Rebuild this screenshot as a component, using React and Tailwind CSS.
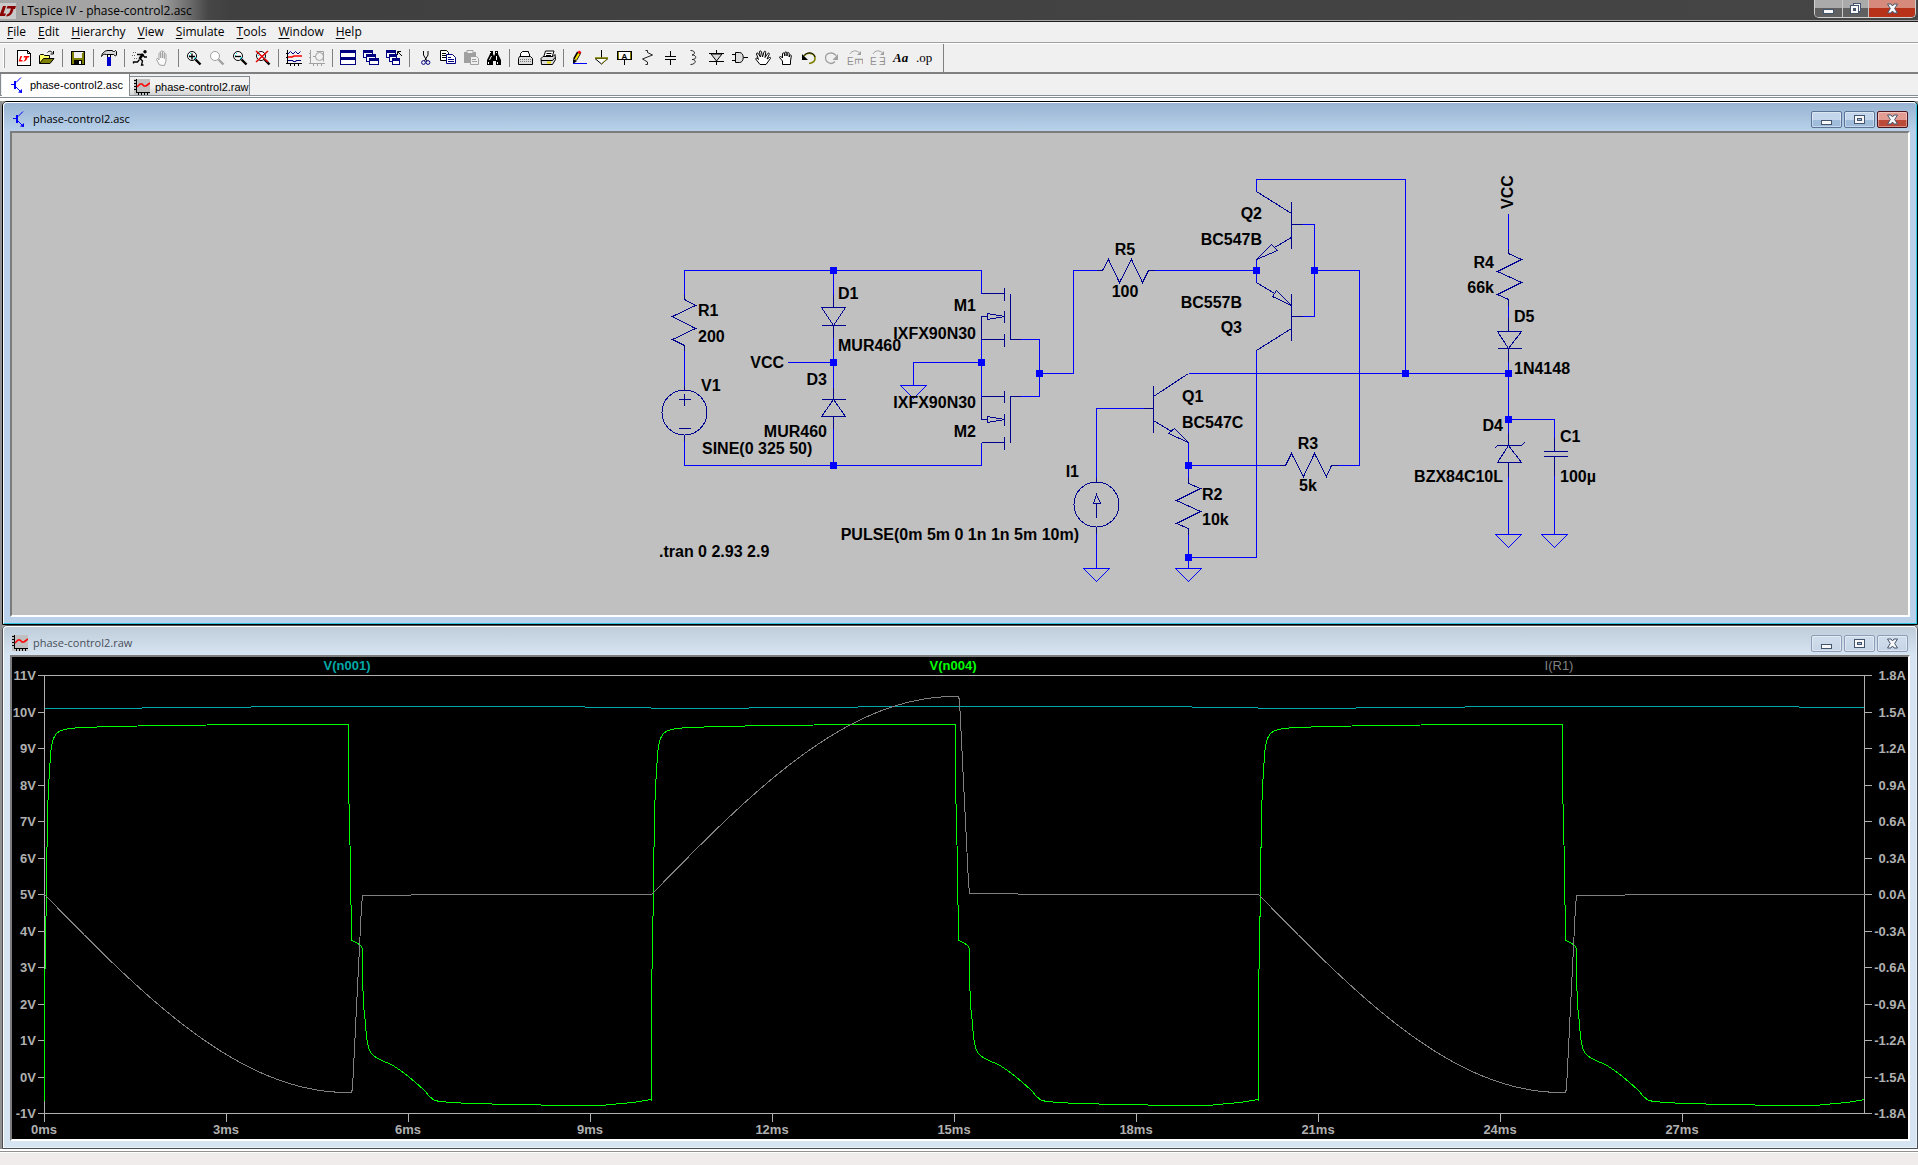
import React from "react";

const UI = "font-['Open_Sans','Noto_Sans',sans-serif]";

/* ---------- small 16x16 toolbar icons ---------- */

function Icon({ children }) {
  return (
    <svg width="16" height="16" viewBox="0 0 16 16" fill="none" stroke="#000" strokeWidth="1" className="block shrink-0">
      {children}
    </svg>
  );
}

function Lens({ color = "#000", tint = "#00e5ff" }) {
  return (
    <>
      <circle cx="6" cy="6" r="4.5" stroke={color} fill="#fff" />
      {tint && <path d="M3 5.5h1M4 3.5h1M8 8.5h1M9 7.5h1" stroke={tint} />}
      <path d="M9.5 9.5L14.5 14.5" stroke={color} strokeWidth="2.4" />
    </>
  );
}

function WindowBox({ x, y, w, h }) {
  return (
    <g shapeRendering="crispEdges">
      <rect x={x + 0.5} y={y + 0.5} width={w - 1} height={h - 1} fill="#fff" stroke="#000080" />
      <rect x={x} y={y} width={w} height="3" fill="#000080" stroke="none" />
    </g>
  );
}

function TransistorIcon() {
  return (
    <svg width="14" height="16" viewBox="0 0 14 16" fill="none" stroke="#0000ff" className="block shrink-0">
      <path d="M1 7.500h3M5 4v8" strokeWidth="1" shapeRendering="crispEdges" />
      <rect x="4" y="4" width="2" height="8" fill="#0000ff" stroke="none" />
      <path d="M6 5.500L11 .500M6 10L10.500 14.500" />
      <path d="M12 16V12L8 15.500z" fill="#0000ff" stroke="none" />
    </svg>
  );
}

function GraphIcon() {
  return (
    <svg width="16" height="16" viewBox="0 0 16 16" fill="none" className="block shrink-0">
      <rect width="16" height="16" fill="#c0c0c0" />
      <path d="M2.5 0v14M0 1.5h2M0 4.5h2M0 7.5h2M0 10.5h2M2 13.5h14M4.5 14v2M7.5 14v2M10.5 14v2M13.5 14v2" stroke="#000" shapeRendering="crispEdges" />
      <path d="M3 8L6 5h2l2 2h2l4-3" stroke="#ff0000" strokeWidth="1.6" />
    </svg>
  );
}

function LogoIcon() {
  return (
    <svg width="16" height="16" viewBox="0 0 16 16" className="block shrink-0">
      <rect width="16" height="16" fill="#c9c9c9" />
      <path d="M3 3h3L3.500 10.500H6L5 13H0V11ZM7.500 3H16l-1 3h-1.500C12.500 10 11.500 13 6 13.500l1-2C9 11 10 9 11 5.500H6.500Z" fill="#8b0000" />
    </svg>
  );
}

const tools = [
  ["New Schematic", <Icon><path d="M1.500.500h10l3 3v12h-13z" fill="#fff" shapeRendering="crispEdges" /><path d="M11.500.500v3h3" /><path d="M4.500 6h1.700L4.500 10h2v1.500H2.500ZM8 6h5.500l-.7 1.500h-1.300C11 10 9.500 11.500 7 11.500c1.500-1 2-2 2.500-4H7.500Z" fill="#f00" stroke="none" /></Icon>],
  ["Open", <Icon><path d="M.500 13.500v-8l1-1h3l1 1h5v3" fill="#ffff66" /><path d="M.500 13.500l4-5h10.500l-4 5z" fill="#808000" /><path d="M8.500 2.500c1.500-2 4-1.500 5 .500M14.500 1v3h-3" /></Icon>],
  null,
  ["Save", <Icon><g shapeRendering="crispEdges"><rect x="1.500" y="1.500" width="13" height="13" fill="#808000" /><rect x="4" y="2" width="8" height="6" fill="#efefef" stroke="none" /><rect x="4" y="10" width="8" height="5" fill="#000" stroke="none" /><rect x="9" y="11" width="2" height="3" fill="#fff" stroke="none" /><path d="M12.500 2v1" stroke="#fff" /></g></Icon>],
  null,
  ["Control Panel", <Icon><path d="M.500 6.500C1 3 4 .500 7 .500h4l1.500 1h1l1-1 1 1v3.500l-1 1-2-1.500H5.500C3 3.500 1.500 5 .500 6.500z" fill="#d8d8d8" /><path d="M6.500 4.500v3M9.500 4.500v3" /><rect x="6" y="7" width="4" height="9" fill="#0000cc" stroke="none" /></Icon>],
  null,
  ["Run", <Icon><circle cx="13" cy="1.800" r="1.700" fill="#000" stroke="none" /><path d="M11 4L7.500 9" strokeWidth="2.600" /><path d="M5 4.500h5.500l2 2.500h2.500M8 8.500l2.500 2.500-1 4h2M7.500 9.500L5.500 12H1.500v1.500" strokeWidth="1.300" /><path d="M1 2.500h3M0 5.500h3M2 8.500h3" stroke="#666" strokeDasharray="1 1" /></Icon>],
  ["Halt", <Icon><path d="M4.500 15L1.500 9.500c0-1.500 1.500-1.500 2.500.500V3.500c0-1 1.700-1 1.700 0V8V1.800c0-1.200 1.800-1.200 1.800 0V8V2.300c0-1.200 1.800-1.200 1.800 0V8.500V4.500c0-1.200 1.700-1.200 1.700 0V11l-1.500 4.500z" stroke="#a0a0a0" fill="#fafafa" /></Icon>],
  null,
  ["Zoom In", <Icon><Lens /><path d="M3 6.500h6M6 3.500v6" strokeWidth="1.400" stroke="#000" /></Icon>],
  ["Pan", <Icon><Lens color="#a0a0a0" tint="" /></Icon>],
  ["Zoom Out", <Icon><Lens /><path d="M3 6.500h6" strokeWidth="1.400" /></Icon>],
  ["Zoom Full Extents", <Icon><Lens /><path d="M1 1L13 12M13 1L1 12" stroke="#e00000" strokeWidth="1.600" /></Icon>],
  null,
  ["Autorange", <Icon><path d="M1.500 0v14M0 13.500h16M4.500 13v3M8.500 13v3M12.500 13v3M0 3.500h2M0 7.500h2" shapeRendering="crispEdges" stroke="#000" /><path d="M2 4L4.500 1.500 7 4 9.500 1.500 12 4 14.500 1.500" stroke="#000080" /><path d="M2 7h4l2-1h8" stroke="#f00" strokeWidth="1.600" /><path d="M2 10.500h5v1h3v-1h5" stroke="#000080" /></Icon>],
  ["Pick Visible Traces", <Icon><g stroke="#a0a0a0"><path d="M1.500 0v14M0 13.500h16M4.500 13v3M8.500 13v3M12.500 13v3M0 3.500h2M0 7.500h2M4 6.500h3" shapeRendering="crispEdges" /><circle cx="10.500" cy="6.500" r="4" /><path d="M7.500 1.500h7M14.500 1.500v10" /></g></Icon>],
  null,
  ["Tile Windows", <Icon><WindowBox x={0} y={0} w={16} h={8} /><WindowBox x={0} y={7} w={16} h={8} /></Icon>],
  ["Cascade Windows", <Icon><WindowBox x={0} y={0} w={10} h={8} /><WindowBox x={3} y={4} w={10} h={8} /><WindowBox x={6} y={8} w={10} h={7} /></Icon>],
  ["Close Windows", <Icon><WindowBox x={0} y={0} w={10} h={8} /><WindowBox x={3} y={4} w={8} h={8} /><WindowBox x={6} y={8} w={8} h={7} /><path d="M11.500 5V1.500H15M12 2l4 4" /></Icon>],
  null,
  ["Cut", <Icon><path d="M6.500 1v4L10 11M11 1v4L7.500 11" stroke="#000" /><circle cx="6.500" cy="12.500" r="1.900" stroke="#000080" /><circle cx="11" cy="12.500" r="1.900" stroke="#000080" /></Icon>],
  ["Copy", <Icon><path d="M.500.500h6l2 2v8h-8z" fill="#fff" /><path d="M2 3.500h4M2 5.500h4M2 7.500h4" /><path d="M6.500 4.500h6l3 3v6h-9z" fill="#fff" stroke="#000080" /><path d="M8 7.500h3M8 9.500h6M8 11.500h6" stroke="#000080" /></Icon>],
  ["Paste", <Icon><path d="M1 2h12v11H1z" fill="#a0a0a0" stroke="none" /><path d="M4 .500h6v3H4z" stroke="#a0a0a0" fill="#efefef" /><path d="M7.500 6.500h6l2 2v6h-8z" fill="#efefef" stroke="#a0a0a0" /><path d="M9 9.500h4M9 11.500h5" stroke="#a0a0a0" /></Icon>],
  ["Find", <Icon><path d="M4 1h3v3l1 2 1-2V1h3v3l3 6v5H10v-4H7v4H1v-5l3-6z" fill="#000" stroke="none" /><path d="M4.500 2v1M10.500 2v1M5.500 6L3.500 10M10.500 6v4M2.500 12v2M11.500 12v2" stroke="#fff" /></Icon>],
  null,
  ["Print Setup", <Icon><path d="M3.500 7V3.500l2-2h6v1.500l1 1V7" fill="#fff" /><path d="M2.500 6.500h11l2 2v6h-14v-6z" fill="#ddd" /><path d="M3 9.500h11M3 11.500h11" stroke="#777" strokeDasharray="1 1" /></Icon>],
  ["Print", <Icon><path d="M3.500 7.500l2-6.500h8.500l-2 6.500z" fill="#fff" /><path d="M6.500 3.500h5M6 5.500h5" /><path d="M1 8.500l2-2h10l2-2 .500 5-3 5H1.500z" fill="#ddd" /><path d="M1 10.500h11.500l2.500-3" /><path d="M7 12.500h4" stroke="#e8d800" strokeWidth="2" /></Icon>],
  null,
  ["Draw Wire", <Icon><path d="M4 9.500L8 2.500" stroke="#000" strokeWidth="4.500" /><path d="M4.500 9.500L8 3.500" stroke="#ffe600" strokeWidth="2" /><path d="M6.500 2.500L8 .500l2.500 1.500L9 4z" fill="#f00" stroke="none" /><path d="M2 9v5l4-3z" fill="#000" stroke="none" /><path d="M2 13.500h14" stroke="#0000ff" /></Icon>],
  ["Place Ground", <Icon><path d="M7.500 0v8" /><path d="M1 8.500h13L7.500 14z" fill="#fff" /><path d="M1 8h13" stroke="#808000" strokeWidth="1.600" /><path d="M7.500 14l6-5.500" stroke="#808000" /></Icon>],
  ["Label Net", <Icon><rect x=".500" y="1.500" width="14" height="8" fill="#fff" /><path d="M1.500 2v7M13.500 2v7" stroke="#808000" /><text x="7.500" y="8.500" textAnchor="middle" stroke="none" fill="#000" className="font-['Liberation_Sans',sans-serif] text-[8px] font-bold">A</text><path d="M7.500 10v5" /></Icon>],
  ["Resistor", <Icon><path d="M5.500.500h2v2l5 2.500-10 4 5 3v2.500h-2" stroke="#222" /></Icon>],
  ["Capacitor", <Icon><path d="M7.500 1v5M7.500 10v5M2 9.500h11M2 6.500h11" shapeRendering="crispEdges" /></Icon>],
  ["Inductor", <Icon><path d="M4.500.500c5 0 5 4 1.500 4.500 5 0 5 4.500 0 4.500 5 0 4 5-1.500 5" stroke="#222" /></Icon>],
  ["Diode", <Icon><path d="M7.500 0v4M7.500 11v4M0 3.500h15M0 11.500h15" shapeRendering="crispEdges" /><path d="M2 4h11L7.500 11z" fill="#d8d8d8" /></Icon>],
  ["Component", <Icon><path d="M3.500 2.500h4c5 0 5 10 0 10h-4z" fill="#ddd" /><path d="M0 4.500h3M0 10.500h3M11.500 7.500h4.500" /></Icon>],
  ["Move", <Icon><path d="M5 14.500L.700 9c0-1.500 1.800-1 2.800.500L1.500 4c0-1.500 1.500-1.500 2 0L5.500 7 4.500 2c0-1.500 1.500-1.500 2 0L7.500 7 9 2c.500-1.300 2-1 1.700.500L10 7.500l2.700-4c1-1 2-.300 1.500 1L12 9l2.500-1.500c1.500-.500 1.500 1 .500 1.500L11 14.500z" fill="#fff" /></Icon>],
  ["Drag", <Icon><path d="M4.500 14.500V11L1.500 7.500c0-1.500 2-1 3 .500V4c0-1.500 2-1.500 2.300 0V6 3c0-1.500 2-1.500 2.200 0v3-2.500c.300-1.300 2-1.300 2.200 0V7l.300-1.500c.800-1 2-.500 1.800.500L12.500 11v3.500z" fill="#fff" /></Icon>],
  ["Undo", <Icon><path d="M3 6c3-4 10-3.500 11 1.500.500 4-2.500 5.500-6 6" stroke="#808000" strokeWidth="1.600" /><path d="M3 5.500c3-4 10-3.500 11 1.500" stroke="#000" /><path d="M1 4v6H7z" fill="#000" stroke="none" /></Icon>],
  ["Redo", <Icon><path d="M12 5.500C9 1.500 2 2.500 1.500 7.500c0 4 2.500 5.500 5.500 6 2 0 3-1 4-2" stroke="#a0a0a0" strokeWidth="1.300" /><path d="M14 4v6H8.500z" fill="#a0a0a0" stroke="none" /></Icon>],
  ["Rotate", <Icon><path d="M3 4C5 0 10 0 12.500 3" stroke="#a0a0a0" /><path d="M14 1v4H10z" fill="#a0a0a0" stroke="none" /><text x="0" y="15" stroke="none" fill="#909090" className="font-['Liberation_Sans',sans-serif] text-[10px]">E</text><text x="8" y="-8" transform="rotate(90)" stroke="none" fill="#909090" className="font-['Liberation_Sans',sans-serif] text-[10px]">E</text></Icon>],
  ["Mirror", <Icon><path d="M3 4C5 0 10 0 12.500 3" stroke="#a0a0a0" /><path d="M14 1v4H10z" fill="#a0a0a0" stroke="none" /><text x="0" y="15" stroke="none" fill="#909090" className="font-['Liberation_Sans',sans-serif] text-[10px]">E</text><text x="9" y="15" stroke="none" fill="#909090" className="font-['Liberation_Sans','DejaVu_Sans',sans-serif] text-[10px]">Ǝ</text></Icon>],
  ["Text", <span className="font-['Liberation_Serif',serif] text-[13px] leading-4 font-bold italic">Aa</span>],
  ["SPICE Directive", <span className="font-['Liberation_Serif',serif] text-[13px] leading-4">.op</span>],
];

/* ---------- window chrome ---------- */

function Glyph({ kind, small }) {
  return (
    <svg width="13" height="13" viewBox="0 0 13 13" className="block" shapeRendering={kind === "close" ? "auto" : "crispEdges"}>
      {kind === "min" && <rect x="1.500" y="7.500" width="10" height="4" fill="#f8f8f8" stroke="#44546c" />}
      {kind === "max" && !small && (
        <>
          <path d="M4.500 1.500h7v8h-7z" fill="#f8f8f8" stroke="#44546c" />
          <path d="M1.500 3.500h8v8h-8z" fill="#f8f8f8" stroke="#44546c" />
          <path d="M4.500 6.500h2v2h-2z" fill="#555" stroke="#44546c" />
        </>
      )}
      {kind === "max" && small && (
        <>
          <path d="M1.500 2.500h10v8h-10z" fill="#f8f8f8" stroke="#44546c" />
          <path d="M4.500 5.500h4v2h-4z" fill="#9fb6d4" stroke="#44546c" />
        </>
      )}
      {kind === "close" && (
        <path d="M1.500 2h3.500l1.500 2 1.500-2h3.500L8.700 6.500 11.500 11H8L6.500 9 5 11H1.500l2.800-4.500z" fill="#f8f8f8" stroke="#44546c" />
      )}
    </svg>
  );
}

function ChildButton({ kind, active }) {
  let tone = "border-[#8d9db8] bg-linear-to-b from-[#d0ddeb] to-[#c6d5e6]";
  if (active) tone = "border-[#5b7396] bg-linear-to-b from-[#c3d6eb] from-50% to-[#a0bcdb] to-50%";
  if (active && kind === "close") tone = "border-[#4a1420] bg-linear-to-b from-[#e39c92] from-50% to-[#bb4a38] to-50%";
  return (
    <button type="button" aria-label={kind} className={`flex h-[17px] w-[31px] items-center justify-center border rounded-[2px] shadow-[inset_0_0_0_1px_rgba(255,255,255,.4)] ${tone}`}>
      <Glyph kind={kind} small />
    </button>
  );
}

function ChildWindow({ title, icon, active, children }) {
  return (
    <section className={`flex min-h-0 flex-1 flex-col rounded-t-[5px] border ${active ? "border-black" : "border-[#4b4f55]"}`}>
      <div
        className={`flex min-h-0 flex-1 flex-col rounded-t-[4px] border border-t-white border-l-white ${
          active ? "border-r-[#2fc3e0] border-b-[#2fc3e0] bg-[#b9d1ea]" : "border-r-[#e8f0f8] border-b-[#e8f0f8] bg-[#d7e4f2]"
        }`}
      >
        <header
          className={`flex h-7 shrink-0 items-center rounded-t-[4px] pt-1 pl-2 pr-2 bg-linear-to-b ${
            active ? "from-[#98b4d2] to-[#b9d1ea]" : "from-[#bfcddb] to-[#d7e4f2]"
          }`}
        >
          <div className="flex w-[21px] items-center">{icon}</div>
          <h2 className={`${UI} text-[11px] leading-4 ${active ? "text-black" : "text-[#4a4f58]"}`}>{title}</h2>
          <div className="ml-auto flex gap-[2px]">
            <ChildButton kind="min" active={active} />
            <ChildButton kind="max" active={active} />
            <ChildButton kind="close" active={active} />
          </div>
        </header>
        <div className="flex min-h-0 flex-1 px-[6px] pb-[6px]">
          <div className="min-h-0 min-w-0 flex-1 border-2 border-t-[#7c7c7c] border-l-[#7c7c7c] border-r-white border-b-white">{children}</div>
        </div>
      </div>
    </section>
  );
}

/* ---------- schematic ---------- */

const wires = [
  "M684 299V270H981V293", "M684 345V390", "M684 435V465H981V442",
  "M833 270V295M833 337V387M833 428V465M787 362H833",
  "M981 339V396M981 362H913V385M1020 339H1039V396H1020",
  "M1039 373H1073V270H1098M1152 270H1256",
  "M1256 191V179H1405V373M1256 259V282M1302 224H1314V316H1302M1314 270H1359V465H1337",
  "M1256 350V557H1188M1188 373H1508M1143 408H1096V478M1096 532V568",
  "M1188 442V483M1188 465H1279M1188 534V568",
  "M1508 213V253M1508 304V317M1508 361V432M1508 419H1554V437M1508 476V534M1554 475V534",
];

const parts = [
  "M684 294V299L695 305L672 316L695 328L672 339L684 345V350",
  "M684 385V390M684 435V440M678 399H690M684 393V405M678 428H690",
  "M833 294V307M821 307H845L833 325ZM821 325H845M833 325V337",
  "M833 387V399M821 399H845M833 399L845 416H821ZM833 416V428",
  "M981 293H1004M1004 287V300M1004 310V322M1004 333V346M981 339H1004M981 339V316H987M987 313V319L1004 316ZM1010 293V339H1020",
  "M981 396H1004M1004 390V402M1004 413V425M1004 436V449M981 396V419H987M987 416V422L1004 419ZM981 442H1004M1010 442V396H1020",
  "M1096 270H1102L1108 259L1119 282L1131 259L1142 282L1148 270H1154",
  "M1256 191L1291 213M1291 201V248M1291 224H1302M1291 237L1274 247M1256 259L1271 244L1277 250Z",
  "M1256 282L1274 293M1291 305L1276 290L1272 296ZM1291 293V340M1291 316H1302M1291 328L1256 350",
  "M1188 373L1153 396M1153 385V432M1143 408H1153M1153 420L1171 431M1188 442L1174 428L1168 433Z",
  "M1188 477V483L1200 488L1176 500L1200 511L1176 523L1188 528V534",
  "M1279 465H1285L1291 453L1303 476L1314 453L1326 476L1331 465H1337",
  "M1096 477V482M1096 527V533M1096 517V503M1096 494L1093 503H1100Z",
  "M1508 248V253L1521 259L1497 271L1521 282L1497 294L1508 299V305",
  "M1508 317V331M1497 331H1521L1508 348ZM1497 348H1521M1508 348V361",
  "M1508 432V445M1494 448L1497 445H1521L1524 442M1508 445L1521 462H1497ZM1508 462V476",
  "M1554 437V451M1543 451H1567M1543 456H1567M1554 456V475",
];

const grounds = [[913, 385], [1096, 568], [1188, 568], [1508, 534], [1554, 534]];
const nodes = [[833, 270], [833, 362], [833, 465], [981, 362], [1039, 373], [1256, 270], [1314, 270], [1405, 373], [1188, 465], [1188, 557], [1508, 373], [1508, 419]];

const labels = [
  [698, 316, "start", "R1"], [698, 342, "start", "200"], [701, 391, "start", "V1"],
  [784, 368, "end", "VCC"], [838, 299, "start", "D1"], [838, 351, "start", "MUR460"],
  [827, 385, "end", "D3"], [827, 437, "end", "MUR460"], [702, 454, "start", "SINE(0 325 50)"],
  [976, 311, "end", "M1"], [976, 339, "end", "IXFX90N30"], [976, 408, "end", "IXFX90N30"], [976, 437, "end", "M2"],
  [1079, 540, "end", "PULSE(0m 5m 0 1n 1n 5m 10m)"], [659, 557, "start", ".tran 0 2.93 2.9"],
  [1125, 255, "middle", "R5"], [1125, 297, "middle", "100"],
  [1262, 219, "end", "Q2"], [1262, 245, "end", "BC547B"], [1242, 308, "end", "BC557B"], [1242, 333, "end", "Q3"],
  [1182, 402, "start", "Q1"], [1182, 428, "start", "BC547C"],
  [1308, 449, "middle", "R3"], [1308, 491, "middle", "5k"],
  [1079, 477, "end", "I1"], [1202, 500, "start", "R2"], [1202, 525, "start", "10k"],
  [1494, 268, "end", "R4"], [1494, 293, "end", "66k"],
  [1514, 322, "start", "D5"], [1514, 374, "start", "1N4148"],
  [1503, 431, "end", "D4"], [1503, 482, "end", "BZX84C10L"],
  [1560, 442, "start", "C1"], [1560, 482, "start", "100µ"],
];

function Schematic() {
  return (
    <svg viewBox="12 133 1896 482" preserveAspectRatio="xMidYMid meet" className="block h-full w-full bg-[#c0c0c0] font-['Liberation_Sans',sans-serif] text-[16px] font-bold">
      <g transform="translate(.5 .5)" fill="none" shapeRendering="crispEdges">
        <path d={wires.join("")} stroke="#0000ff" />
        <path d={parts.join("")} stroke="#000090" />
        <circle cx="684" cy="412" r="22.500" stroke="#000090" />
        <circle cx="1096" cy="504" r="22.500" stroke="#000090" />
        {grounds.map(([x, y]) => (
          <path key={`${x}-${y}`} d={`M${x - 13} ${y}H${x + 13}L${x} ${y + 13}Z`} stroke="#0000ff" />
        ))}
      </g>
      {nodes.map(([x, y]) => (
        <rect key={`${x}-${y}`} x={x - 3} y={y - 3} width="7" height="7" fill="#0000ff" />
      ))}
      {labels.map(([x, y, anchor, t]) => (
        <text key={`${x}-${y}`} x={x} y={y} textAnchor={anchor} fill="#000">{t}</text>
      ))}
      <text transform="translate(1513 209) rotate(-90)" fill="#000">VCC</text>
    </svg>
  );
}

/* ---------- waveform plot ---------- */

const PERIOD = 607;
const gate = [
  [44, 1100], [44, 988], [45, 951], [46, 883], [47, 812], [48, 788], [49, 770], [50, 755], [51, 745], [53, 738], [56, 733], [60, 730], [69, 728],
  [81, 727], [112, 726], [163, 725], [250, 724], [348, 724], [348, 790], [349, 816], [350, 873], [351, 935], [351, 940], [356, 942], [360, 945],
  [362, 948], [362, 975], [363, 1005], [365, 1023], [366, 1037], [368, 1047], [370, 1052], [374, 1056], [381, 1060], [391, 1064], [400, 1070],
  [408, 1076], [415, 1082], [424, 1090], [429, 1096], [434, 1100], [440, 1101], [450, 1102], [471, 1103], [511, 1104], [569, 1105], [600, 1105],
  [612, 1104], [620, 1103], [633, 1102], [651, 1099],
];
/* quarter sine while the switch conducts, then a fast drop to zero */
const conduction = Array.from({ length: 78 }, (_, i) => [44 + i * 4, 198 * Math.sin((Math.PI * i * 4) / PERIOD)]).filter(([x]) => x < 351);
const current = [...conduction, [351, 198], [352, 194], [361, 12], [362, 1], [410, 1], [411, 0], [651, 0]];

const pts = (list) => list.map((p) => p.join(",")).join(" ");
const greenTrace = [0, 1, 2].flatMap((k) => gate.map(([x, y]) => [Math.min(x + k * PERIOD, 1864), y]));
const grayTrace = [0, 1, 2].flatMap((k) => current.map(([x, d]) => [Math.min(x + k * PERIOD, 1864), 894 + (k === 1 ? -d : d)]));
const cyanTrace = [0, 1, 2].flatMap((k) =>
  [[44, 708], [141, 708], [142, 707], [250, 707], [251, 706], [584, 706], [585, 707], [650, 707]].map(([x, y]) => [Math.min(x + k * PERIOD, 1864), y])
);

const volts = ["11V", "10V", "9V", "8V", "7V", "6V", "5V", "4V", "3V", "2V", "1V", "0V", "-1V"];
const amps = ["1.8A", "1.5A", "1.2A", "0.9A", "0.6A", "0.3A", "0.0A", "-0.3A", "-0.6A", "-0.9A", "-1.2A", "-1.5A", "-1.8A"];
const times = ["0ms", "3ms", "6ms", "9ms", "12ms", "15ms", "18ms", "21ms", "24ms", "27ms"];
const rowY = (i) => 675 + Math.round(i * 36.5);

function Plot() {
  return (
    <svg viewBox="12 657 1896 482" preserveAspectRatio="xMidYMid meet" className="block h-full w-full bg-black font-['Liberation_Sans',sans-serif] text-[13px] font-bold">
      <g transform="translate(.5 .5)" fill="none" shapeRendering="crispEdges">
        <polyline points={pts(cyanTrace)} stroke="#00a8a8" />
        <rect x="44" y="675" width="1820" height="438" stroke="#b0b0b0" />
        {volts.map((v, i) => (
          <path key={v} d={`M37 ${rowY(i)}H44M1864 ${rowY(i)}H1871`} stroke="#b0b0b0" />
        ))}
        {times.map((t, i) => (
          <path key={t} d={`M${44 + i * 182} 1113V1121`} stroke="#b0b0b0" />
        ))}
        <polyline points={pts(greenTrace)} stroke="#00ff00" />
        <polyline points={pts(grayTrace)} stroke="#808080" />
      </g>
      <g fill="#b0b0b0">
        {volts.map((v, i) => (
          <text key={v} x="36" y={rowY(i) + 5} textAnchor="end">{v}</text>
        ))}
        {amps.map((a, i) => (
          <text key={a} x="1906" y={rowY(i) + 5} textAnchor="end">{a}</text>
        ))}
        {times.map((t, i) => (
          <text key={t} x={44 + i * 182} y="1134" textAnchor="middle">{t}</text>
        ))}
      </g>
      <text x="347" y="670" textAnchor="middle" fill="#00a8a8">V(n001)</text>
      <text x="953" y="670" textAnchor="middle" fill="#00ff00">V(n004)</text>
      <text x="1559" y="670" textAnchor="middle" fill="#808080" className="font-normal">I(R1)</text>
    </svg>
  );
}

/* ---------- application ---------- */

const menus = ["File", "Edit", "Hierarchy", "View", "Simulate", "Tools", "Window", "Help"];

export default function App() {
  return (
    <div className={`flex h-screen min-h-[600px] flex-col overflow-hidden bg-[#f0f0f0] text-black ${UI}`}>
      <header className="flex h-[22px] shrink-0 items-start border-b border-[#1c1c1c] bg-linear-to-r from-[#8a8a8a] via-[#404040] via-12% to-[#454545] shadow-[inset_0_-1px_0_#a8a8a8]">
        <div className="flex h-5 items-center gap-[5px] bg-linear-to-r from-[#a4a4a4] from-75% to-transparent pt-0.5 pr-4">
          <LogoIcon />
          <h1 className="text-[12px] leading-4">LTspice IV - phase-control2.asc</h1>
        </div>
        <div className="ml-auto mr-[2px] flex h-[18px] overflow-hidden rounded-b-[5px] border border-t-0 border-[#d0d0d0]">
          <button type="button" aria-label="Minimize" className="flex w-7 items-center justify-center border-r border-[#c8c8c8] bg-linear-to-b from-[#aaaaaa] from-50% to-[#606060] to-50%"><Glyph kind="min" /></button>
          <button type="button" aria-label="Restore" className="flex w-[26px] items-center justify-center border-r border-[#c8c8c8] bg-linear-to-b from-[#aaaaaa] from-50% to-[#606060] to-50%"><Glyph kind="max" /></button>
          <button type="button" aria-label="Close" className="flex w-[46px] items-center justify-center bg-linear-to-b from-[#d58a7c] from-50% to-[#b8321a] to-50%"><Glyph kind="close" /></button>
        </div>
      </header>

      <nav className="flex h-[21px] shrink-0 items-center border-b border-[#a0a0a0] pl-px">
        {menus.map((m) => (
          <button key={m} type="button" className="px-[6px] text-[12px] leading-5">
            <span className="underline underline-offset-2">{m[0]}</span>
            {m.slice(1)}
          </button>
        ))}
      </nav>

      <div role="toolbar" aria-label="Main" className="flex h-[31px] shrink-0 items-stretch border-t border-b-2 border-t-white border-b-[#808080]">
        <div className="mx-[3px] my-1 w-0.5 border-r border-[#a0a0a0] bg-white" />
        <div className="ml-2 flex items-center border-r border-[#808080] pr-1">
          {tools.map((t, i) =>
            t ? (
              <button key={i} type="button" aria-label={t[0]} title={t[0]} className="flex h-[22px] w-[23px] items-center">
                {t[1]}
              </button>
            ) : (
              <div key={i} className="h-[18px] w-2 border-l border-[#808080]" />
            )
          )}
        </div>
      </div>

      <div role="tablist" className="flex h-[22px] shrink-0 items-end border-b border-l border-[#868a91] bg-[#f0f0f0] pl-px">
        <button role="tab" type="button" aria-selected="true" className="-mb-px flex h-[22px] w-32 items-center gap-[6px] border-r border-[#868a91] bg-white pl-2 font-['Liberation_Sans',sans-serif] text-[11px] whitespace-nowrap">
          <TransistorIcon />
          phase-control2.asc
        </button>
        <button role="tab" type="button" aria-selected="false" className="flex h-[19px] w-[120px] items-center gap-[5px] border-t border-r border-[#868a91] bg-linear-to-b from-[#f2f2f2] from-50% to-[#d4d4d4] pt-0.5 pl-1 font-['Liberation_Sans',sans-serif] text-[11px] whitespace-nowrap">
          <GraphIcon />
          phase-control2.raw
        </button>
      </div>
      <div className="h-[5px] shrink-0 bg-white pt-px"><div className="h-px bg-[#868a91]" /></div>

      <main className="flex min-h-0 flex-1 flex-col border-l-2 border-[#909090] bg-[#a0a0a0]">
        <ChildWindow title="phase-control2.asc" icon={<TransistorIcon />} active>
          <Schematic />
        </ChildWindow>
        <ChildWindow title="phase-control2.raw" icon={<GraphIcon />}>
          <Plot />
        </ChildWindow>
      </main>

      <footer className="h-4 shrink-0 bg-white pt-[2px]">
        <div className="h-full border-t border-[#909090] bg-[#f0eceb] shadow-[inset_0_1px_0_#fff]" />
      </footer>
    </div>
  );
}
